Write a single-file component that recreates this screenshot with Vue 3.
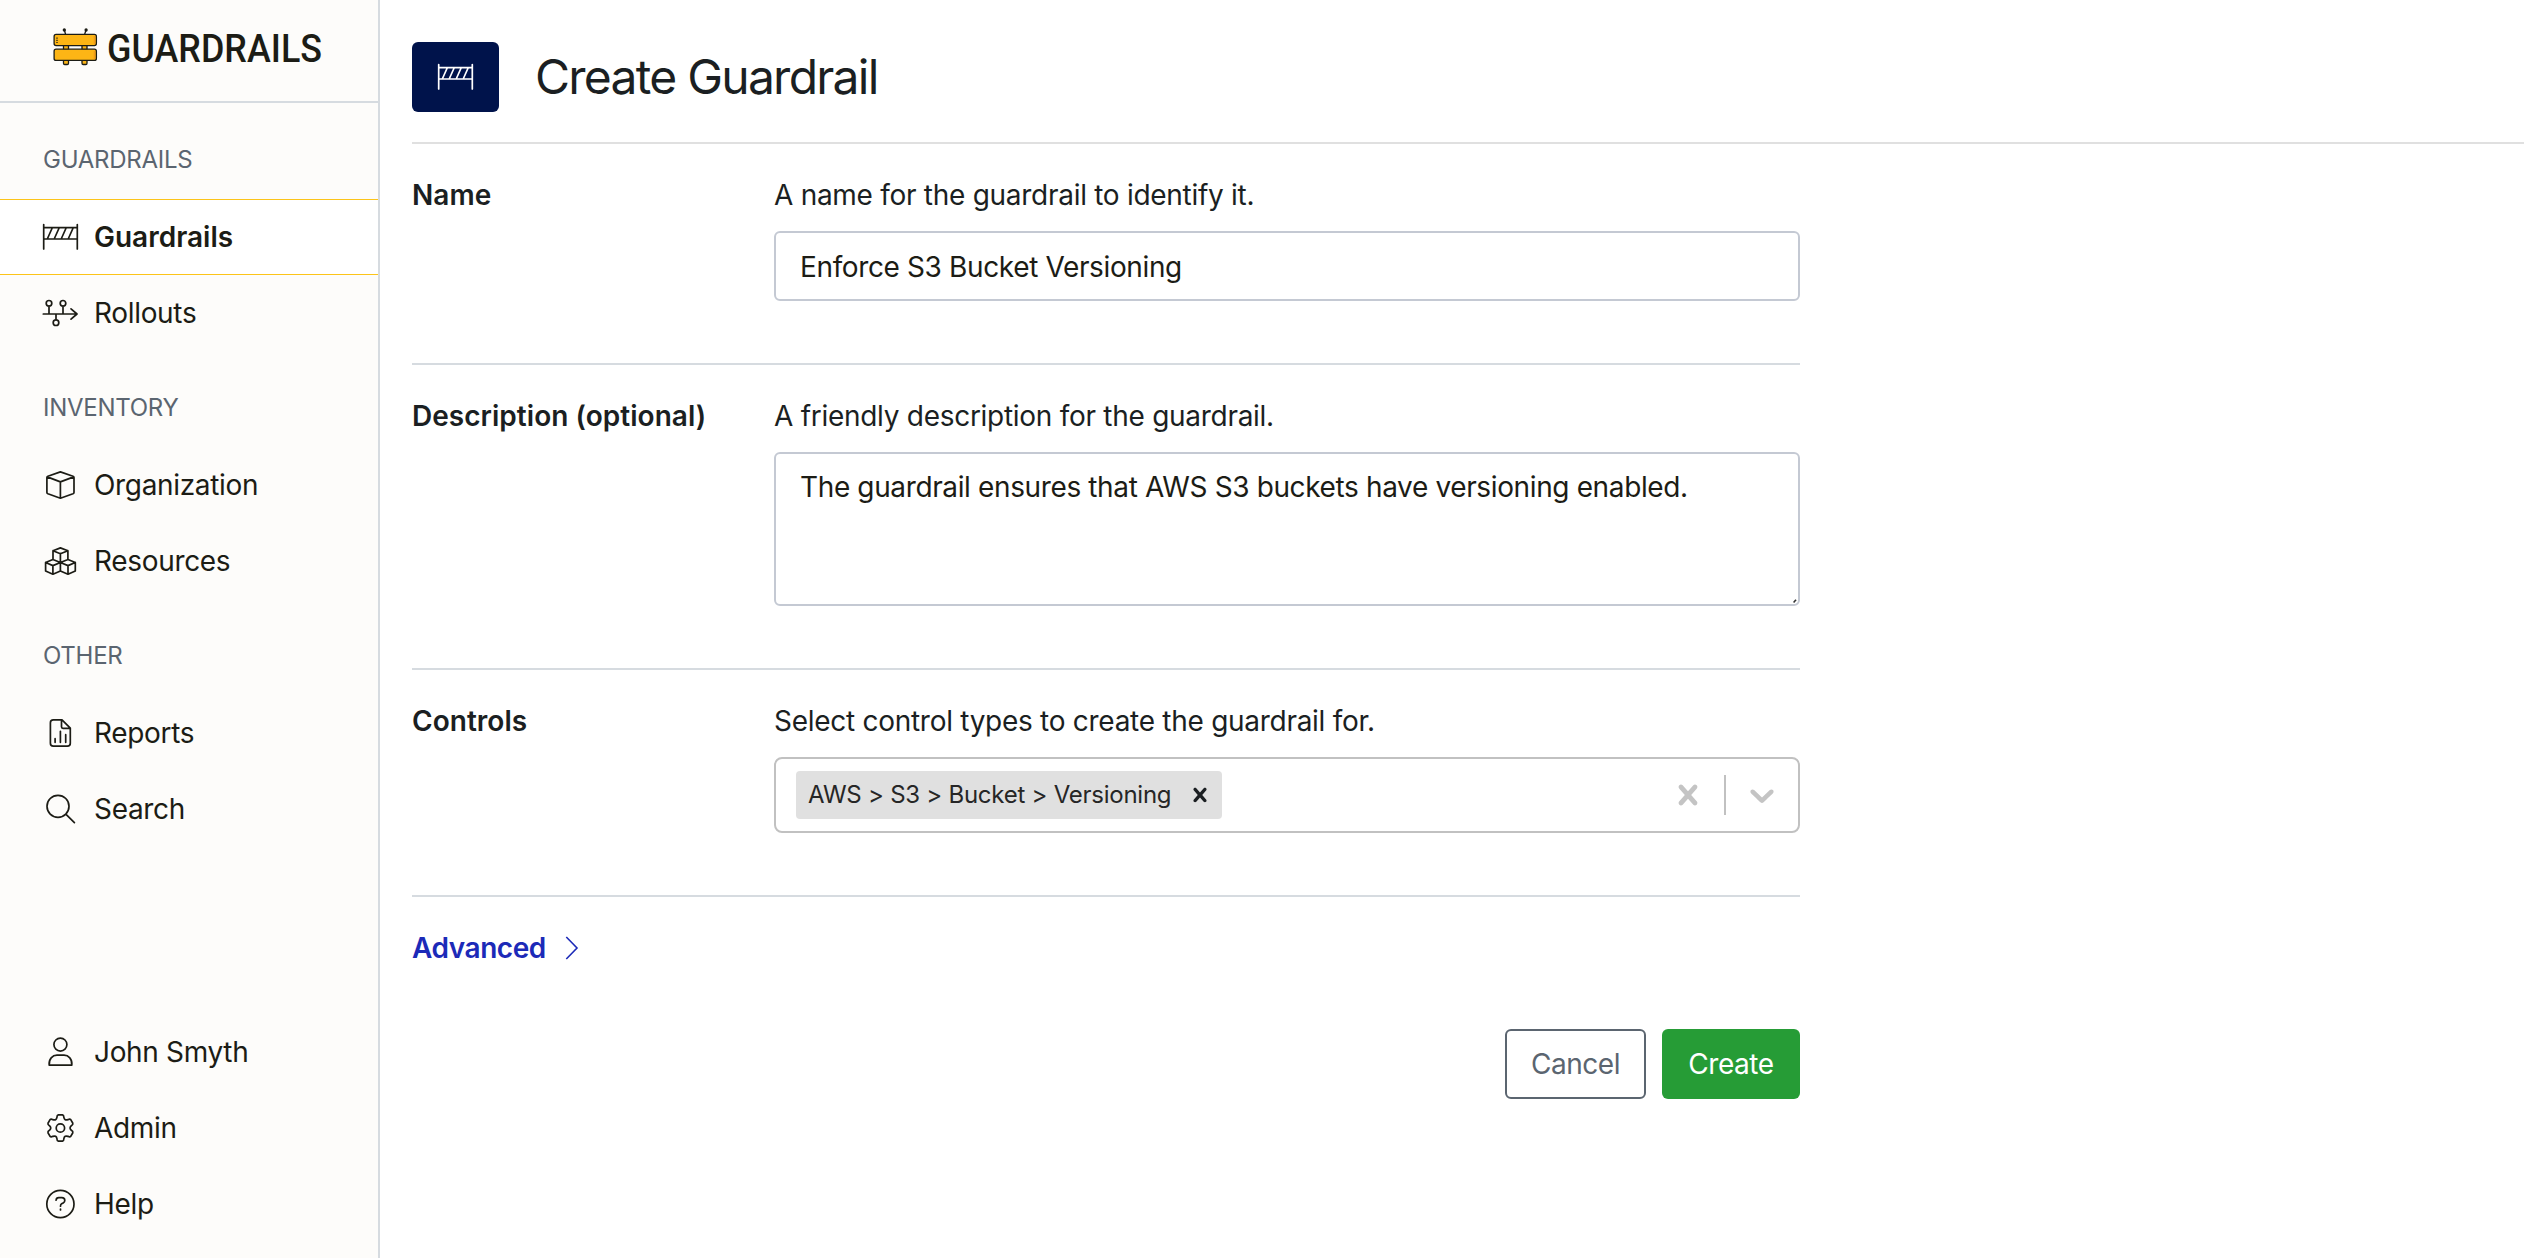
<script setup>
import { ref } from 'vue'

const name = ref('Enforce S3 Bucket Versioning')
const description = ref('The guardrail ensures that AWS S3 buckets have versioning enabled.')

const pt = (r, deg) => {
  const a = ((deg - 90) * Math.PI) / 180
  return `${(18.4 + r * Math.cos(a)).toFixed(2)} ${(15 + r * Math.sin(a)).toFixed(2)}`
}
let gear = `M${pt(13.3, -9)}`
for (let i = 0; i < 6; i++) {
  const a = i * 60
  gear += `L${pt(13.3, a + 9)}Q${pt(13.3, a + 15)} ${pt(11.2, a + 18)}Q${pt(8.3, a + 30)} ${pt(11.2, a + 42)}Q${pt(13.3, a + 45)} ${pt(13.3, a + 51)}`
}
gear += 'Z'

const guardrail = 'M1.7 2.5V27M35.3 2.5V27M1.7 5.7H35.3M1.7 17H35.3M5.5 16.5L10.2 6M12.4 16.5L17.1 6M19.4 16.5L24.1 6M26.4 16.5L31.1 6'

const groups = [
  {
    title: 'GUARDRAILS',
    items: [
      { label: 'Guardrails', active: true, icon: guardrail },
      {
        label: 'Rollouts',
        icon: 'M1.3 16H35M29 10.8L35 16L29 21.2M7 8.2V16M21 8.2V16M14 16V21.8M9.8 5.3a2.8 2.8 0 1 0-5.6 0a2.8 2.8 0 1 0 5.6 0M23.8 5.3a2.8 2.8 0 1 0-5.6 0a2.8 2.8 0 1 0 5.6 0M16.8 24.7a2.8 2.8 0 1 0-5.6 0a2.8 2.8 0 1 0 5.6 0'
      }
    ]
  },
  {
    title: 'INVENTORY',
    items: [
      {
        label: 'Organization',
        icon: 'M18.4 1.9L31 6.2Q32 6.6 32 7.6V22.4Q32 23.4 31 23.8L18.4 28.2L5.9 23.8Q4.9 23.4 4.9 22.4V7.6Q4.9 6.6 5.9 6.2ZM5.2 6.9L18.4 11.9L31.7 6.9M18.4 11.9V28.2'
      },
      {
        label: 'Resources',
        icon: 'M11 13.3V4.7L18.4 1.9L25.9 4.7V13.3M11 4.7L18.4 7.7L25.9 4.7M18.4 7.7V16.5M10.9 13.5L18.4 16.5V25L10.9 28.2L3.6 25V16.5ZM3.6 16.5L10.9 19.6L18.4 16.5L26 19.6L33.3 16.5M10.9 19.6V28.2M18.4 16.5L26 13.5L33.3 16.5V25L26 28.2L18.4 25M26 19.6V28.2'
      }
    ]
  },
  {
    title: 'OTHER',
    items: [
      {
        label: 'Reports',
        icon: 'M19.6 1.9H11.3Q8.4 1.9 8.4 4.8V25.3Q8.4 28.2 11.3 28.2H25.4Q28.3 28.2 28.3 25.3V10.2L20 1.9M19.5 1.9V8.8Q19.5 10.3 21 10.3H28.3M13.1 20.7V24.3M18.4 13.3V24.3M23.7 16.7V24.3'
      },
      { label: 'Search', icon: 'M27 12.3a11 11 0 1 0-22 0a11 11 0 1 0 22 0M23.8 20.1L32.4 28.7' }
    ]
  }
]

const footer = [
  {
    label: 'John Smyth',
    icon: 'M24.9 7.6a6.5 6.5 0 1 0-13 0a6.5 6.5 0 1 0 13 0M7.2 28.2C6.6 22 10.5 18.2 15 18.2H22C26.5 18.2 30.4 22 29.8 28.2Z'
  },
  { label: 'Admin', icon: gear + 'M22.6 15a4.2 4.2 0 1 0-8.4 0a4.2 4.2 0 1 0 8.4 0' },
  {
    label: 'Help',
    icon: 'M32 15a13.6 13.6 0 1 0-27.2 0a13.6 13.6 0 1 0 27.2 0M14.1 11.2Q14.3 8.7 16.8 8.7H19.8Q22.8 8.7 22.8 11.4Q22.8 13 21.2 13.9L19.6 14.8Q18.5 15.4 18.5 17.2M18.5 20.1V20.9'
  }
]

const cross = 'M14.348 14.849c-0.469 0.469-1.229 0.469-1.697 0l-2.651-3.030-2.651 3.029c-0.469 0.469-1.229 0.469-1.697 0-0.469-0.469-0.469-1.229 0-1.697l2.758-3.15-2.759-3.152c-0.469-0.469-0.469-1.228 0-1.697s1.228-0.469 1.697 0l2.652 3.031 2.651-3.031c0.469-0.469 1.228-0.469 1.697 0s0.469 1.229 0 1.697l-2.758 3.152 2.758 3.15c0.469 0.469 0.469 1.229 0 1.698z'
const chevron = 'M4.516 7.548c0.436-0.446 1.043-0.481 1.576 0l3.908 3.747 3.908-3.747c0.533-0.481 1.141-0.446 1.574 0 0.436 0.445 0.408 1.197 0 1.615-0.406 0.418-4.695 4.502-4.695 4.502-0.217 0.223-0.502 0.335-0.787 0.335s-0.57-0.112-0.789-0.335c0 0-4.287-4.084-4.695-4.502s-0.436-1.17 0-1.615z'
</script>

<template>
  <div class="app">
    <aside class="sidebar">
      <div class="brand">
        <svg class="logo" width="378" height="101" viewBox="0 0 378 101">
          <g stroke="#1c1c15" stroke-width="1.3" fill="#fdb515">
            <path d="M65.6 34.5L64.4 30M84.6 34.5L86 30" fill="none" />
            <path d="M63.5 44h5v6h-5zM82 44h5v6h-5zM63.5 59.5h5v3.8q0 1.2-1.2 1.2h-2.6q-1.2 0-1.2-1.2zM82 59.5h5v3.8q0 1.2-1.2 1.2h-2.6q-1.2 0-1.2-1.2z" />
            <rect x="54.1" y="34.4" width="42.3" height="11.2" rx="2" />
            <rect x="54.1" y="49.2" width="42.3" height="11.2" rx="2" />
            <circle cx="64.3" cy="30" r="1" fill="#1c1c15" />
            <circle cx="86.1" cy="30" r="1" fill="#1c1c15" />
            <path d="M57 37.5v5.5" stroke-dasharray="1.2 1" fill="none" />
            <path d="M94.4 36v8M94.4 51v8" stroke="#f39a1a" fill="none" />
          </g>
          <text x="107" y="61.5" class="wordmark" textLength="215" lengthAdjust="spacingAndGlyphs">GUARDRAILS</text>
        </svg>
      </div>
      <nav class="nav">
        <section v-for="g in groups" :key="g.title">
          <h2 class="group">{{ g.title }}</h2>
          <a v-for="i in g.items" :key="i.label" class="item" :class="{ active: i.active }">
            <svg class="icon" viewBox="0 0 37 30"><path :d="i.icon" /></svg>
            <span>{{ i.label }}</span>
          </a>
        </section>
      </nav>
      <div class="foot">
        <a v-for="i in footer" :key="i.label" class="item">
          <svg class="icon" viewBox="0 0 37 30"><path :d="i.icon" /></svg>
          <span>{{ i.label }}</span>
        </a>
      </div>
    </aside>

    <main class="main">
      <header class="head">
        <div class="tile">
          <svg class="icon" viewBox="0 0 37 30"><path :d="guardrail" /></svg>
        </div>
        <h1>Create Guardrail</h1>
      </header>

      <form class="form" @submit.prevent>
        <div class="row r1">
          <label class="label">Name</label>
          <div class="field">
            <p class="hint">A name for the guardrail to identify it.</p>
            <input v-model="name" class="input" type="text" />
          </div>
        </div>
        <div class="row r2">
          <label class="label">Description (optional)</label>
          <div class="field">
            <p class="hint">A friendly description for the guardrail.</p>
            <div class="area-wrap">
              <textarea v-model="description" class="input area"></textarea>
              <svg class="grip" width="6" height="6" viewBox="0 0 6 6"><path d="M1.6 4.6L4 1.8" /></svg>
            </div>
          </div>
        </div>
        <div class="row r3">
          <label class="label">Controls</label>
          <div class="field">
            <p class="hint">Select control types to create the guardrail for.</p>
            <div class="select">
              <div class="chip">
                <span>AWS &gt; S3 &gt; Bucket &gt; Versioning</span>
                <svg width="28" height="28" viewBox="0 0 20 20"><path :d="cross" /></svg>
              </div>
              <div class="indicators">
                <svg width="40" height="40" viewBox="0 0 20 20"><path :d="cross" /></svg>
                <i class="sep"></i>
                <svg width="40" height="40" viewBox="0 0 20 20"><path :d="chevron" /></svg>
              </div>
            </div>
          </div>
        </div>
        <a class="advanced">
          <span>Advanced</span>
          <svg width="14" height="26" viewBox="0 0 14 26"><path d="M1.3 2L12 13L1.3 24" /></svg>
        </a>
        <div class="actions">
          <button class="btn cancel" type="button">Cancel</button>
          <button class="btn create" type="submit">Create</button>
        </div>
      </form>
    </main>
  </div>
</template>

<style>
body {
  background: #fff;
  overflow: hidden;
}
</style>

<style scoped>
* {
  box-sizing: border-box;
}
.app {
  display: flex;
  width: 100%;
  height: 1258px;
  font-family: Inter, "Liberation Sans", sans-serif;
  font-size: 28px;
  color: #1b1f22;
}
.sidebar {
  display: flex;
  flex-direction: column;
  width: 380px;
  flex: none;
  padding-bottom: 16px;
  background: #fdfcfa;
  border-right: 2px solid #d6dbe0;
  color: #1c1c15;
}
.brand {
  height: 103px;
  flex: none;
  border-bottom: 2px solid #d6dbe0;
}
.logo {
  display: block;
}
.wordmark {
  font-family: Roboto, "Liberation Sans", sans-serif;
  font-size: 39.5px;
  font-weight: 500;
  fill: #1c1c15;
  stroke: none;
}
.nav {
  flex: 1;
}
.group {
  display: flex;
  align-items: center;
  height: 96px;
  margin: 0;
  padding: 17px 0 0 43px;
  font-size: 24px;
  font-weight: 400;
  letter-spacing: -0.27px;
  color: #5b6570;
}
.item {
  display: flex;
  align-items: center;
  gap: 15px;
  height: 76px;
  padding-left: 42px;
  letter-spacing: -0.33px;
}
.item.active {
  background: #fff;
  border-top: 1px solid #fcc419;
  border-bottom: 1px solid #fcc419;
  font-weight: 600;
  letter-spacing: 0;
}
.icon {
  width: 37px;
  height: 30px;
  flex: none;
  fill: none;
  stroke: currentColor;
  stroke-width: 1.7;
  stroke-linejoin: round;
  stroke-linecap: round;
}
.main {
  flex: 1;
  padding: 0 18px 0 32px;
}
.head {
  display: flex;
  align-items: center;
  gap: 36px;
  height: 144px;
  padding: 12px 0 0;
  border-bottom: 2px solid #e0e0e0;
}
.tile {
  display: flex;
  align-items: center;
  justify-content: center;
  width: 87px;
  height: 70px;
  border-radius: 6px;
  background: #00134b;
  color: #fff;
}
h1 {
  margin: 0;
  font-size: 48px;
  font-weight: 400;
  line-height: 60px;
  letter-spacing: -1.75px;
}
.form {
  width: 1388px;
}
.row {
  display: grid;
  grid-template-columns: 362px 1026px;
  border-bottom: 2px solid #d6dbe0;
  line-height: 42px;
  padding-top: 30px;
}
.r1 {
  height: 221px;
}
.r2 {
  height: 305px;
}
.r3 {
  height: 227px;
}
.label {
  font-weight: 600;
  letter-spacing: 0.03px;
}
.hint {
  margin: 0 0 15px;
  letter-spacing: -0.28px;
  white-space: nowrap;
}
.input {
  display: block;
  width: 1026px;
  height: 70px;
  margin: 0;
  padding: 2px 24px 0;
  border: 2px solid #c4c9d3;
  border-radius: 6px;
  outline: none;
  background: #fff;
  font-family: inherit;
  font-size: 28px;
  letter-spacing: -0.37px;
  color: #1c1c15;
}
.area-wrap {
  position: relative;
}
.area {
  height: 154px;
  padding-top: 12px;
  line-height: 42px;
  resize: none;
  overflow: hidden;
}
.grip {
  position: absolute;
  right: 2px;
  bottom: 2px;
  fill: none;
  stroke: #333;
  stroke-width: 1.6;
}
.select {
  display: flex;
  align-items: center;
  justify-content: space-between;
  height: 76px;
  padding-left: 20px;
  border: 2px solid #c1c1c1;
  border-radius: 8px;
}
.chip {
  display: flex;
  align-items: center;
  justify-content: space-between;
  width: 426px;
  height: 48px;
  padding: 0 8px 0 12px;
  border-radius: 4px;
  background: #e0e0e0;
  font-size: 24px;
  letter-spacing: -0.25px;
  color: #262626;
  white-space: nowrap;
}
.chip svg {
  fill: #1b1f22;
}
.indicators {
  display: flex;
  align-items: center;
  gap: 16px;
  padding-right: 16px;
}
.indicators svg {
  display: block;
  margin-left: 16px;
  fill: #c4c4c4;
}
.indicators .sep {
  width: 2px;
  height: 40px;
  background: #c1c1c1;
}
.indicators .sep + svg {
  margin-left: 0;
}
.advanced {
  display: flex;
  align-items: center;
  gap: 19px;
  margin-top: 30px;
  height: 42px;
  font-weight: 600;
  letter-spacing: -0.45px;
  color: #1c2ab8;
}
.advanced svg {
  fill: none;
  stroke: currentColor;
  stroke-width: 1.6;
}
.actions {
  display: flex;
  justify-content: flex-end;
  gap: 16px;
  margin-top: 60px;
}
.btn {
  height: 70px;
  margin: 0;
  padding: 0;
  border-radius: 6px;
  font-family: inherit;
  font-size: 28px;
  letter-spacing: -0.45px;
}
.cancel {
  width: 141px;
  border: 2px solid #5b6570;
  background: #fff;
  color: #5b6570;
}
.create {
  width: 138px;
  border: none;
  background: #269c36;
  color: #fff;
}
</style>
